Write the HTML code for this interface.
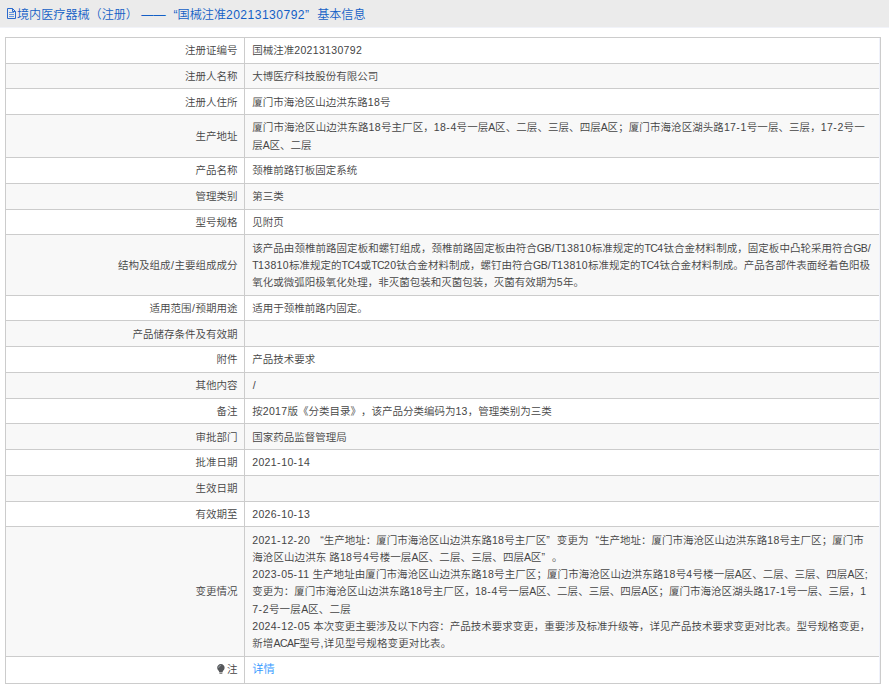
<!DOCTYPE html>
<html lang="zh-CN">
<head>
<meta charset="utf-8">
<title>境内医疗器械（注册）</title>
<style>
html,body{margin:0;padding:0;background:#fff;}
body{width:889px;height:687px;overflow:hidden;position:relative;}
#wrap{position:absolute;left:0;top:0;width:889px;
  font-family:"Liberation Sans","Noto Sans CJK SC",sans-serif;font-size:10.5px;color:#444;font-weight:350;}
#hd{height:27px;border-bottom:1px solid #f1f3f9;background:#ebebeb;color:#135fc6;font-size:12.1px;line-height:27.4px;white-space:nowrap;position:relative;}
#hd svg{position:absolute;left:7px;top:8px;}
#hd span.t{position:absolute;left:17px;top:1.8px;}
.hn{letter-spacing:0.46px;}
table{border-collapse:collapse;margin:8.95px 0 0 4.96px;width:875.9px;table-layout:fixed;}
col.c1{width:238.9px;}
td{border:1px solid #ccc;padding:4.22px 7.8px 3.225px 7.4px;line-height:17.3px;vertical-align:middle;word-break:break-all;text-spacing-trim:space-all;}
tr:nth-child(even) td{background:#f8f8f8;}
td.l{text-align:right;padding-right:6.3px;}
a{color:#39f;text-decoration:none;font-size:11.3px;}
.nw{white-space:nowrap;}
.a{letter-spacing:0.33px;}
.c{letter-spacing:-0.57px;}
.A{letter-spacing:-0.25px;}
.h{letter-spacing:0.8px;}
.s{letter-spacing:0;padding:0 0.6px;}
.ql{display:inline-block;width:1em;text-align:right;}
.qr{display:inline-block;width:1em;text-align:left;}
.bulb{display:inline-block;vertical-align:-1.3px;margin-right:2.2px;}
tr:last-child td{padding-bottom:4.2px;}
#seam{position:absolute;left:879px;top:38px;width:1px;height:645px;background:#f0f2fb;}
</style>
</head>
<body>
<div id="wrap">
<div id="hd"><svg width="9" height="11" viewBox="0 0 9 11"><path d="M0.5 0.5H5.5L8.5 3.5V10.5H0.5Z M5.5 0.5V3.5H8.5" fill="none" stroke="#2a6ace" stroke-width="1"/><path d="M2 4.5H7M2 6.5H7M2 8.5H7" stroke="#6a98dc" stroke-width="1"/></svg><span class="t">境内医疗器械（注册） ——<span class="ql">“</span>国械注准<span class="hn">20213130792</span><span class="qr">”</span>基本信息</span></div>
<table>
<colgroup><col class="c1"><col></colgroup>
<tr><td class="l">注册证编号</td><td>国械注准<span class="a">20213130792</span></td></tr>
<tr><td class="l">注册人名称</td><td>大博医疗科技股份有限公司</td></tr>
<tr><td class="l">注册人住所</td><td>厦门市海沧区山边洪东路<span class="a">18</span>号</td></tr>
<tr><td class="l">生产地址</td><td class="nw"><span style="letter-spacing:0.075px">厦门市海沧区山边洪东路<span class="a">18</span>号主厂区，<span class="a">18</span><span class="h">-</span><span class="a">4</span>号一层<span class="A">A</span>区、二层、三层、四层<span class="A">A</span>区；厦门市海沧区湖头路<span class="a">17</span><span class="h">-</span><span class="a">1</span>号一层、三层，<span class="a">17</span><span class="h">-</span><span class="a">2</span>号一</span><br>层<span class="A">A</span>区、二层</td></tr>
<tr><td class="l">产品名称</td><td>颈椎前路钉板固定系统</td></tr>
<tr><td class="l">管理类别</td><td>第三类</td></tr>
<tr><td class="l">型号规格</td><td>见附页</td></tr>
<tr><td class="l">结构及组成<span class="s">/</span>主要组成成分</td><td class="nw"><span style="letter-spacing:0.041px">该产品由颈椎前路固定板和螺钉组成，颈椎前路固定板由符合<span class="c">GB</span><span class="s">/</span><span class="c">T</span><span class="a">13810</span>标准规定的<span class="c">TC</span><span class="a">4</span>钛合金材料制成，固定板中凸轮采用符合<span class="c">GB</span><span class="s">/</span></span><br><span style="letter-spacing:0.019px"><span class="c">T</span><span class="a">13810</span>标准规定的<span class="c">TC</span><span class="a">4</span>或<span class="c">TC</span><span class="a">20</span>钛合金材料制成，螺钉由符合<span class="c">GB</span><span class="s">/</span><span class="c">T</span><span class="a">13810</span>标准规定的<span class="c">TC</span><span class="a">4</span>钛合金材料制成。产品各部件表面经着色阳极</span><br>氧化或微弧阳极氧化处理，非灭菌包装和灭菌包装，灭菌有效期为<span class="a">5</span>年。</td></tr>
<tr><td class="l">适用范围<span class="s">/</span>预期用途</td><td>适用于颈椎前路内固定。</td></tr>
<tr><td class="l">产品储存条件及有效期</td><td></td></tr>
<tr><td class="l">附件</td><td>产品技术要求</td></tr>
<tr><td class="l">其他内容</td><td><span class="s">/</span></td></tr>
<tr><td class="l">备注</td><td>按<span class="a">2017</span>版《分类目录》，该产品分类编码为<span class="a">13</span>，管理类别为三类</td></tr>
<tr><td class="l">审批部门</td><td>国家药品监督管理局</td></tr>
<tr><td class="l">批准日期</td><td><span class="a">2021</span><span class="h">-</span><span class="a">10</span><span class="h">-</span><span class="a">14</span></td></tr>
<tr><td class="l">生效日期</td><td></td></tr>
<tr><td class="l">有效期至</td><td><span class="a">2026</span><span class="h">-</span><span class="a">10</span><span class="h">-</span><span class="a">13</span></td></tr>
<tr><td class="l">变更情况</td><td class="nw"><span style="letter-spacing:0.018px"><span class="a">2021</span><span class="h">-</span><span class="a">12</span><span class="h">-</span><span class="a">20</span> <span class="ql">“</span>生产地址：厦门市海沧区山边洪东路<span class="a">18</span>号主厂区<span class="qr">”</span>变更为<span class="ql">“</span>生产地址：厦门市海沧区山边洪东路<span class="a">18</span>号主厂区；厦门市</span><br><span style="letter-spacing:0.088px">海沧区山边洪东 路<span class="a">18</span>号<span class="a">4</span>号楼一层<span class="A">A</span>区、二层、三层、四层<span class="A">A</span>区<span class="qr">”</span>。</span><br><span style="letter-spacing:0.081px"><span class="a">2023</span><span class="h">-</span><span class="a">05</span><span class="h">-</span><span class="a">11</span> 生产地址由厦门市海沧区山边洪东路<span class="a">18</span>号主厂区；厦门市海沧区山边洪东路<span class="a">18</span>号<span class="a">4</span>号楼一层<span class="A">A</span>区、二层、三层、四层<span class="A">A</span>区<span class="a">;</span></span><br><span style="letter-spacing:0.016px">变更为：厦门市海沧区山边洪东路<span class="a">18</span>号主厂区，<span class="a">18</span><span class="h">-</span><span class="a">4</span>号一层<span class="A">A</span>区、二层、三层、四层<span class="A">A</span>区；厦门市海沧区湖头路<span class="a">17</span><span class="h">-</span><span class="a">1</span>号一层、三层，<span class="a">1</span></span><br><span style="letter-spacing:0.250px"><span class="a">7</span><span class="h">-</span><span class="a">2</span>号一层<span class="A">A</span>区、二层</span><br><span style="letter-spacing:0.010px"><span class="a">2024</span><span class="h">-</span><span class="a">12</span><span class="h">-</span><span class="a">05</span> 本次变更主要涉及以下内容：产品技术要求变更，重要涉及标准升级等，详见产品技术要求变更对比表。型号规格变更，</span><br><span style="letter-spacing:0.127px">新增<span class="c">ACAF</span>型号<span class="a">,</span>详见型号规格变更对比表。</span></td></tr>
<tr><td class="l"><svg class="bulb" width="7.8" height="10.4" viewBox="0 0 8 10" preserveAspectRatio="none"><path d="M4 0C1.8 0 .2 1.7 .2 3.7C.2 5.2 1.2 6 1.8 6.8C2.1 7.2 2.2 7.6 2.2 7.9H5.8C5.8 7.6 5.9 7.2 6.2 6.8C6.8 6 7.8 5.2 7.8 3.7C7.8 1.7 6.2 0 4 0Z" fill="#55575a"/><path d="M2.5 8.3H5.5V9.3C5.5 9.7 5.2 10 4.8 10H3.2C2.8 10 2.5 9.7 2.5 9.3Z" fill="#8a8a8a"/><path d="M1.7 3.6C1.7 2.4 2.7 1.5 3.9 1.5" fill="none" stroke="#b9c4cc" stroke-width=".7"/></svg>注</td><td><a>详情</a></td></tr>
</table>
<div id="seam"></div>
</div>
</body>
</html>
